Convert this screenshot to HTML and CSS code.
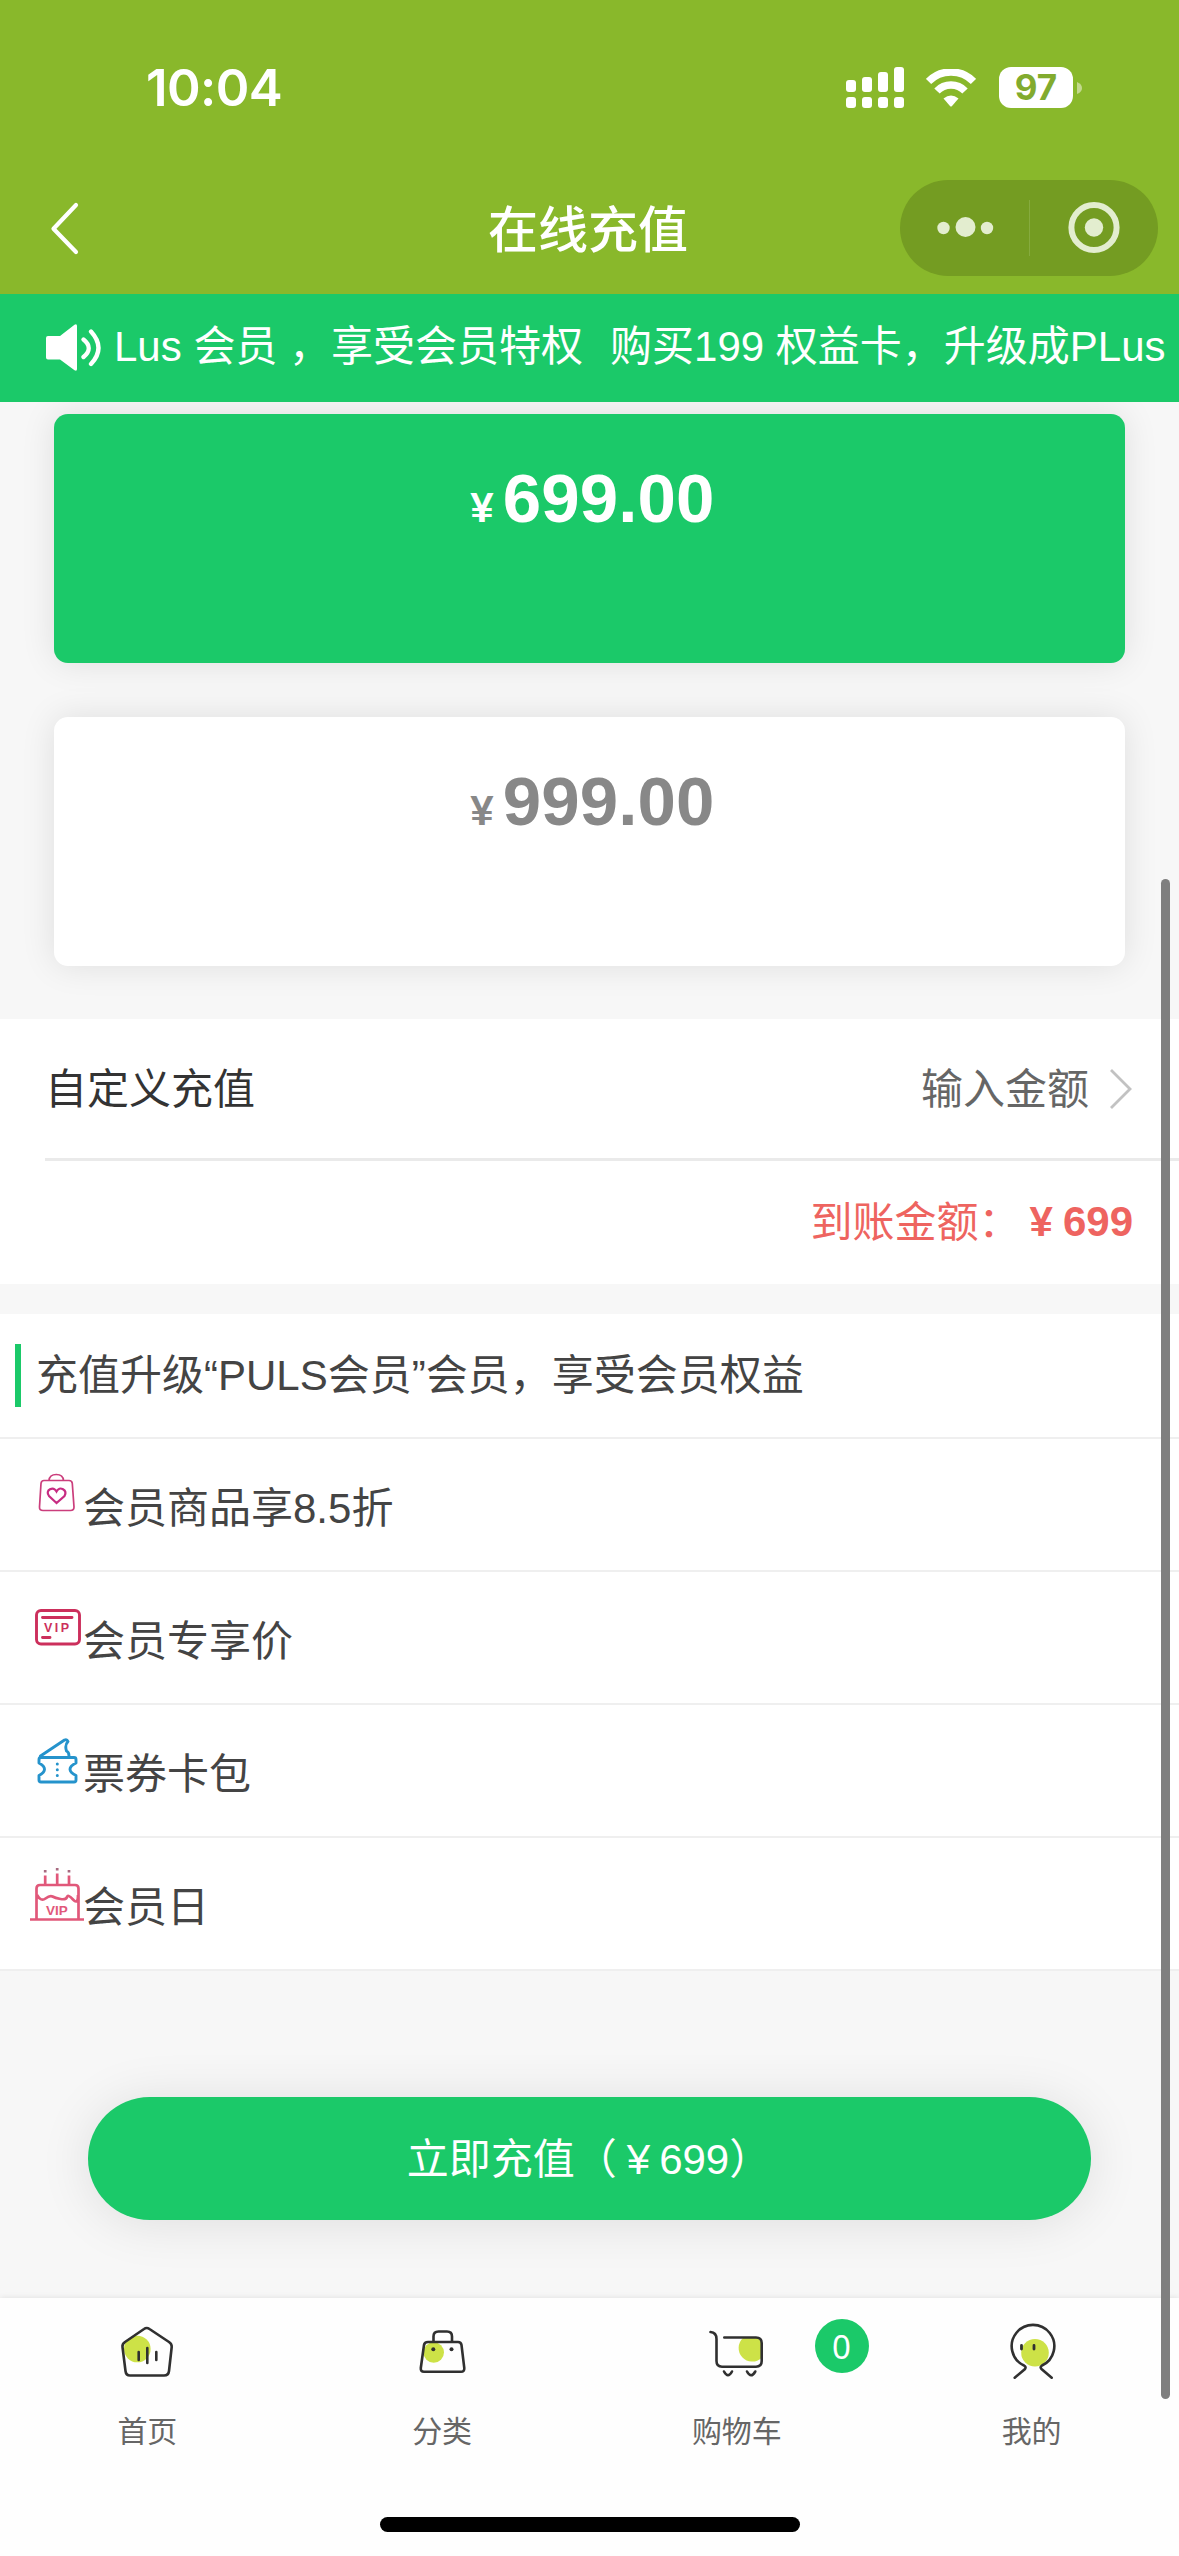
FILE: index.html
```html
<!DOCTYPE html>
<html lang="zh-CN">
<head>
<meta charset="utf-8">
<title>在线充值</title>
<link rel="stylesheet" href="styles.css">
</head>
<body>
<div class="app">
  <header class="header">
    <div class="status">
      <span class="clock">10:04</span>
      <div class="indicators">
        <svg class="signal" viewBox="0 0 58 41" fill="#fff">
          <rect x="0" y="13" width="10" height="12" rx="3"/><rect x="16" y="10" width="10" height="15" rx="3"/><rect x="32" y="5" width="10" height="20" rx="3"/><rect x="48" y="0" width="10" height="25" rx="3"/>
          <rect x="0" y="30" width="10" height="11" rx="3"/><rect x="16" y="30" width="10" height="11" rx="3"/><rect x="32" y="30" width="10" height="11" rx="3"/><rect x="48" y="30" width="10" height="11" rx="3"/>
        </svg>
        <svg class="wifi" viewBox="0 0 50 38">
          <path d="M2.500 12.500A31.500 31.500 0 0 1 47.500 12.500" fill="none" stroke="#fff" stroke-width="7.500"/>
          <path d="M11 22A19.500 19.500 0 0 1 39 22" fill="none" stroke="#fff" stroke-width="7.500"/>
          <path d="M17.500 29.500Q25 23.500 32.500 29.500L26 37Q25 38 24 37Z" fill="#fff"/>
        </svg>
        <div class="battery"><span>97</span></div>
        <svg class="nub" viewBox="0 0 5 12"><path d="M0 0Q5 2 5 6T0 12Z" fill="#c3d98d"/></svg>
      </div>
    </div>
    <div class="navbar">
      <svg class="back" viewBox="0 0 30 54"><path d="M26 4L3.500 27.700L26 51" fill="none" stroke="#fff" stroke-width="4.200" stroke-linecap="round" stroke-linejoin="round"/></svg>
      <h1 class="title">在线充值</h1>
      <div class="capsule">
        <svg viewBox="0 0 258 96" fill="#e3edcf">
          <circle cx="43.500" cy="48" r="6.200"/><circle cx="65.500" cy="47" r="10"/><circle cx="87" cy="48" r="6.200"/>
          <path d="M129.500 20V76" stroke="#86ab3e" stroke-width="1"/>
          <circle cx="194" cy="47.500" r="22.600" fill="none" stroke="#e3edcf" stroke-width="6"/><circle cx="194" cy="47.500" r="9.200"/>
        </svg>
      </div>
    </div>
  </header>

  <div class="notice">
    <svg class="speaker" viewBox="0 0 56 48">
      <path d="M0 14Q0 12 2 12H14L28.500 .8Q31 -.5 31 2V45Q31 47.500 28.500 46.200L14 35.500H2Q0 35.500 0 33.500Z" fill="#fff"/>
      <path d="M37.500 15.500Q48 24 37.500 33M45 7.500Q60 24 45 40" fill="none" stroke="#fff" stroke-width="4.300" stroke-linecap="round"/>
    </svg>
    <div class="marquee"><span>Lus 会员 ，享受会员特权</span><span>购买199 权益卡，升级成PLus</span></div>
  </div>

  <main class="content">
    <section class="cards">
      <div class="card card-active"><small>¥</small><b>699.00</b></div>
      <div class="card"><small>¥</small><b>999.00</b></div>
    </section>

    <section class="custom">
      <div class="custom-row">
        <span class="label">自定义充值</span>
        <span class="custom-input"><span class="label">输入金额</span>
          <svg class="arrow" viewBox="0 0 24 42"><path d="M2 2L21 21L2 40" fill="none" stroke="#c2c2c2" stroke-width="2.800"/></svg>
        </span>
      </div>
      <div class="arrival"><span class="label">到账金额：</span><b>¥<i>699</i></b></div>
    </section>

    <section class="benefits">
      <h2 class="benefits-title"><span>充值升级“PULS会员”会员，享受会员权益</span></h2>
      <div class="benefit">
        <svg viewBox="0 0 54 54" fill="none" stroke="#cb3e7c" stroke-width="1.700">
          <g transform="translate(0 2)"><path d="M14 10.500H39Q42 10.500 42.300 13.500L44 37Q44 40.500 40.500 40.500H13Q9.300 40.500 9.500 37L11 13.500Q11.300 10.500 14 10.500ZM19 10.500Q19.500 4.500 26.300 4.500T33.500 10.500"/>
          <path d="M26.500 33L19 26Q16 21.500 20 19.300T26.500 21.500Q29 17 33 19.300T34.500 26Z" stroke="#c72c82" stroke-width="2.200"/></g>
        </svg>
        <span>会员商品享8.5折</span>
      </div>
      <div class="benefit">
        <svg viewBox="0 0 54 54" fill="none" stroke="#cc2f5c" stroke-width="2.900" stroke-linecap="round">
          <rect x="6.500" y="9.500" width="43" height="33.500" rx="4.500"/><path d="M12.500 16.500H42M12.500 36.500H20"/>
          <text class="vip-card" x="14" y="31">VIP</text>
        </svg>
        <span>会员专享价</span>
      </div>
      <div class="benefit">
        <svg viewBox="0 0 54 54" fill="none" stroke="#2593cc" stroke-width="2.900" stroke-linejoin="round" stroke-linecap="round">
          <path d="M11 23.500H44Q46 23.500 46 25.500V29Q34 35 46 41.500V46Q46 48 44 48H11Q9 48 9 46V41.500Q20 35 9 29V25.500Q9 23.500 11 23.500ZM10.500 22L34.500 6Q37 5 38 7.500Q34.500 11 36.500 17Q39 18 39 22"/>
          <path d="M27.300 30V30.100M27.300 35.700V35.800M27.300 41.500V41.600" stroke-width="3"/>
        </svg>
        <span>票券卡包</span>
      </div>
      <div class="benefit">
        <svg viewBox="0 0 54 54" fill="none" stroke="#e1587a" stroke-width="2.700">
          <path d="M6.500 52V21.500Q6.500 18 10 18H45Q48.500 18 48.500 21.500V52M0 52.500H54M15.200 8.500V17.500M27.200 6.500V17.500M39 8.500V17.500M7 28Q11 35 15.500 31.500T22.500 29.500T30.500 32T37 30T43 32.500T48 28"/>
          <path d="M15.200 3V5.500M27.200 1V3.500M39 3V5.500" stroke="#a76a80"/>
          <text class="vip-cake" x="16" y="48">VIP</text>
        </svg>
        <span>会员日</span>
      </div>
    </section>

    <button class="submit">立即充值（<span>¥</span>699）</button>
  </main>

  <nav class="tabbar">
    <div class="tabs">
      <a class="tab">
        <svg viewBox="0 0 60 60"><circle cx="20.300" cy="27" r="13.300" fill="#cde247"/>
          <g fill="none" stroke="#303030" stroke-width="2.600" stroke-linecap="round"><path d="M27 7Q29.700 5 32.500 7L52 20Q55 22 54.700 25L52 49Q51.500 53.500 47 53.500H13Q9 53.500 8.500 49L5.500 25Q5 22 8 20Z"/><path d="M21.700 30V38M30.300 26V41M39.300 30V38"/></g></svg>
        <span>首页</span>
      </a>
      <a class="tab">
        <svg viewBox="0 0 60 60"><circle cx="21.700" cy="30.500" r="10.300" fill="#cde247"/>
          <g fill="none" stroke="#303030" stroke-width="2.600"><path d="M16 20H46Q49 20 49.500 23L52.300 46Q52.500 49.800 49 49.800H12Q8.500 49.800 8.800 46L12 23Q12.500 20 16 20ZM21.500 20V14.500Q21.500 9.500 26.500 9.500H35Q40 9.500 40 14.500V20"/></g><circle cx="21.300" cy="27.300" r="2" fill="#303030"/><circle cx="39.500" cy="27.300" r="2" fill="#303030"/></svg>
        <span>分类</span>
      </a>
      <a class="tab">
        <svg viewBox="0 0 60 60"><path d="M54.500 22V36A12 12 0 1 1 36 16H50Q54.500 16 54.500 22Z" fill="#cde247"/>
          <g fill="none" stroke="#303030" stroke-width="2.600" stroke-linecap="round"><path d="M3.500 10Q9.500 10.500 9.500 17V39Q9.500 44.700 15 44.700H49Q54.700 44.700 54.700 39V21Q54.700 15.500 49 15.500H17.300M17 49.500Q21 57 25 49.500M40 49.500Q44 57 48.300 49.500"/></g></svg>
        <em class="badge">0</em>
        <span>购物车</span>
      </a>
      <a class="tab">
        <svg viewBox="0 0 60 60"><circle cx="33" cy="30.700" r="13.800" fill="#cde247"/>
          <g fill="none" stroke="#303030" stroke-width="2.600" stroke-linecap="round"><path d="M12.700 55.700L23 47Q24.500 45 22 43.500A21.300 21.300 0 1 1 40 43.500Q37.500 45 39.500 47L49.700 55.700"/><path d="M19.500 23.500V27M32 23.500V27" stroke-width="2.800"/></g></svg>
        <span>我的</span>
      </a>
    </div>
    <div class="home-indicator"></div>
  </nav>
  <div class="scrollbar"></div>
</div>
</body>
</html>
```
FILE: styles.css
```css
* { box-sizing: border-box; }
body { margin: 0; font-family: "Liberation Sans", "Noto Sans CJK SC", sans-serif; font-size: 42px; color: #444; background: #f7f7f7; }
svg { display: block; flex: none; }
.app { position: relative; width: 1179px; height: 2556px; display: flex; flex-direction: column; overflow: hidden; }

.header { height: 294px; flex: none; background: #89b82b; color: #fff; }
.status { height: 180px; padding: 67px 97px 0 146px; display: flex; justify-content: space-between; align-items: flex-start; }
.clock { font: 600 51px/42px Inter, sans-serif; letter-spacing: -0.6px; }
.indicators { display: flex; align-items: center; }
.signal { width: 58px; height: 41px; }
.wifi { width: 50px; height: 38px; margin-left: 22px; }
.battery { width: 74px; height: 41px; margin-left: 23px; border-radius: 12px; background: #fff; color: #82ab2e; font: 700 35px/41px Inter, sans-serif; text-align: center; }
.nub { width: 5px; height: 12px; margin-left: 4px; }
.navbar { height: 96px; padding: 0 21px 0 50px; display: grid; grid-template-columns: 30px 1fr 258px; align-items: center; }
.back { width: 30px; height: 54px; }
.title { margin: 0; padding: 6px 0 0 408px; font-weight: 500; font-size: 50px; line-height: 90px; }
.capsule { width: 258px; height: 96px; border-radius: 48px; background: #749c22; }

.notice { position: relative; z-index: 1; height: 108px; flex: none; padding-left: 46px; display: flex; align-items: center; background: #1bc969; color: #fff; overflow: hidden; }
.speaker { width: 56px; height: 48px; margin-right: 12px; }
.marquee { display: flex; gap: 27px; padding-bottom: 2px; white-space: nowrap; line-height: 60px; }

.content { flex: 1; display: flex; flex-direction: column; }
.cards { padding: 12px 54px 53px; display: grid; gap: 54px; }
.card { height: 249px; padding: 39px 0 0 6px; border-radius: 14px; background: #fff; color: #888; box-shadow: 0 0 34px rgba(0, 0, 0, .1); display: flex; justify-content: center; align-items: baseline; }
.card-active { background: #1bc969; color: #fff; }
.card small { margin-right: 9px; font-size: 42px; font-weight: 700; }
.card b { font-size: 69px; line-height: 92px; letter-spacing: .15px; }

.label { padding-bottom: 6px; }
.custom { height: 265px; background: #fff; }
.custom-row { height: 142px; margin-left: 45px; padding: 0 46px 0 0; border-bottom: 3px solid #eaeaea; display: flex; justify-content: space-between; align-items: center; color: #333; }
.custom-input { display: flex; align-items: center; color: #666; }
.arrow { width: 24px; height: 42px; margin-left: 20px; }
.arrival { height: 123px; padding: 0 46px 2px 0; display: flex; justify-content: flex-end; align-items: center; color: #ee6460; }
.arrival b { margin-left: 9px; }
.arrival i { font-style: normal; margin-left: 10px; }

.benefits { margin-top: 30px; background: #fff; }
.benefits-title { height: 125px; margin: 0; padding-left: 15px; display: flex; align-items: center; border-bottom: 2px solid #efefef; font-size: 42px; font-weight: 400; }
.benefits-title span { height: 63px; line-height: 63px; padding-left: 15px; border-left: 6px solid #1bc969; }
.benefit { height: 133px; padding-left: 30px; display: flex; align-items: center; border-bottom: 2px solid #efefef; }
.benefit svg { width: 54px; height: 54px; margin-bottom: 19px; }
.benefit span { margin-left: -1px; padding-bottom: 1px; }
.vip-card { font: 700 12.5px "Liberation Sans", sans-serif; letter-spacing: 2.500px; fill: #cc2f5c; stroke: none; }
.vip-cake { font: 700 13.5px "Liberation Sans", sans-serif; letter-spacing: 0; fill: #e1587a; stroke: none; }

.submit { margin: 126px 88px 0; height: 123px; padding: 0 1px 6px 0; border: 0; border-radius: 62px; background: #1bc969; color: #fff; font: inherit; box-shadow: 0 3px 52px rgba(0, 0, 0, .1); }
.submit span { margin: 0 9px 0 10px; }

.tabbar { height: 258px; flex: none; display: flex; flex-direction: column; align-items: center; background: #fefefe; box-shadow: 0 0 6px rgba(0, 0, 0, .1); }
.tabs { width: 100%; height: 219px; display: grid; grid-template-columns: repeat(4, 1fr); }
.tab { position: relative; padding-top: 24px; display: flex; flex-direction: column; align-items: center; gap: 27px; font-size: 30px; line-height: 46px; color: #666; }
.tab svg { width: 60px; height: 60px; }
.badge { position: absolute; left: 225px; top: 21px; width: 54px; height: 54px; border-radius: 50%; background: #1bc969; color: #fff; font: 400 33px/55px "Noto Sans", sans-serif; text-align: center; }
.home-indicator { width: 420px; height: 15px; border-radius: 8px; background: #000; }
.scrollbar { position: absolute; z-index: 2; left: 1161px; top: 879px; width: 9px; height: 1520px; border-radius: 5px; background: #7f7f7f; }
```
